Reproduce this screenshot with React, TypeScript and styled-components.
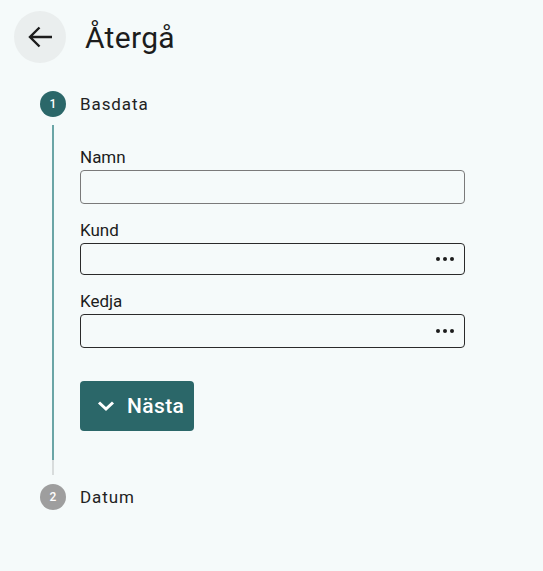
import React from 'react';
import styled, { createGlobalStyle } from 'styled-components';

const GlobalStyle = createGlobalStyle`
  html, body {
    margin: 0;
    padding: 0;
    background: #f5fafa;
    font-family: Roboto, "Noto Sans", sans-serif;
    color: #1c1c1c;
  }
`;

const Page = styled.div`
  width: 543px;
  min-height: 571px;
  background: #f5fafa;
  padding: 11px 0 0 14px;
  box-sizing: border-box;
`;

const Header = styled.div`
  display: flex;
  align-items: center;
  gap: 19px;
`;

const BackButton = styled.button`
  width: 52px;
  height: 52px;
  border-radius: 50%;
  border: none;
  background: #eaeeee;
  display: flex;
  align-items: center;
  justify-content: center;
  padding: 0;
  cursor: pointer;
`;

const Title = styled.h1`
  margin: 0;
  font-size: 30px;
  font-weight: 400;
  letter-spacing: 0.3px;
  color: #1c1c1c;
`;

const Stepper = styled.div`
  margin-top: 28px;
  padding-left: 26px;
`;

const StepHead = styled.div`
  display: flex;
  align-items: center;
  gap: 14px;
  height: 26px;
`;

const StepCircle = styled.div<{ $active?: boolean }>`
  width: 26px;
  height: 26px;
  border-radius: 50%;
  background: ${p => (p.$active ? '#2b6769' : '#9e9e9e')};
  color: #fff;
  font-size: 12px;
  font-weight: 500;
  display: flex;
  align-items: center;
  justify-content: center;
`;

const StepLabel = styled.span`
  font-size: 17px;
  letter-spacing: 0.9px;
  color: #222;
`;

const StepBody = styled.div`
  margin: 8px 0 9px 12px;
  border-left: 2px solid #6aa5a6;
  padding: 22px 0 44px 26px;
  position: relative;
`;

const LineTail = styled.div`
  position: absolute;
  left: -2px;
  bottom: 0;
  width: 2px;
  height: 15px;
  background: #d8dcdc;
`;

const Field = styled.div`
  display: flex;
  flex-direction: column;
  margin-bottom: 16px;
`;

const Label = styled.label`
  font-size: 17px;
  color: #1c1c1c;
  margin-bottom: 3px;
  line-height: 20px;
`;

const InputBox = styled.div<{ $dark?: boolean; $h: number }>`
  width: 385px;
  height: ${p => p.$h}px;
  box-sizing: border-box;
  border: 1.5px solid ${p => (p.$dark ? '#2a2a2a' : '#7a7a7a')};
  border-radius: 4px;
  display: flex;
  align-items: center;
  justify-content: flex-end;
  padding-right: 10px;
  background: transparent;
`;

const Dots = styled.span`
  display: flex;
  gap: 3px;
  span {
    width: 4px;
    height: 4px;
    border-radius: 50%;
    background: #1c1c1c;
  }
`;

const NextButton = styled.button`
  margin-top: 33px;
  height: 50px;
  width: 114px;
  border: none;
  border-radius: 4px;
  background: #2b6769;
  color: #fff;
  font-family: Roboto, sans-serif;
  font-size: 21px;
  font-weight: 500;
  letter-spacing: 0.4px;
  display: flex;
  align-items: center;
  gap: 12px;
  padding: 0 0 0 17px;
  cursor: pointer;
`;

const Ellipsis = () => (
  <Dots>
    <span />
    <span />
    <span />
  </Dots>
);

export default function App() {
  return (
    <>
      <GlobalStyle />
      <Page>
        <Header>
          <BackButton aria-label="Tillbaka">
            <svg width="26" height="26" viewBox="0 0 26 26">
              <path d="M25 13H3.5M12.5 3.5 3 13l9.5 9.5" fill="none" stroke="#1c1c1c" strokeWidth="2.4" />
            </svg>
          </BackButton>
          <Title>Återgå</Title>
        </Header>
        <Stepper>
          <StepHead>
            <StepCircle $active>1</StepCircle>
            <StepLabel>Basdata</StepLabel>
          </StepHead>
          <StepBody>
            <Field>
              <Label>Namn</Label>
              <InputBox $h={34} />
            </Field>
            <Field>
              <Label>Kund</Label>
              <InputBox $dark $h={32}>
                <Ellipsis />
              </InputBox>
            </Field>
            <Field>
              <Label>Kedja</Label>
              <InputBox $dark $h={34}>
                <Ellipsis />
              </InputBox>
            </Field>
            <NextButton>
              <svg width="18" height="12" viewBox="0 0 18 12">
                <polyline points="2,2.5 9,9 16,2.5" fill="none" stroke="#fff" strokeWidth="3" />
              </svg>
              Nästa
            </NextButton>
            <LineTail />
          </StepBody>
          <StepHead>
            <StepCircle>2</StepCircle>
            <StepLabel>Datum</StepLabel>
          </StepHead>
        </Stepper>
      </Page>
    </>
  );
}
